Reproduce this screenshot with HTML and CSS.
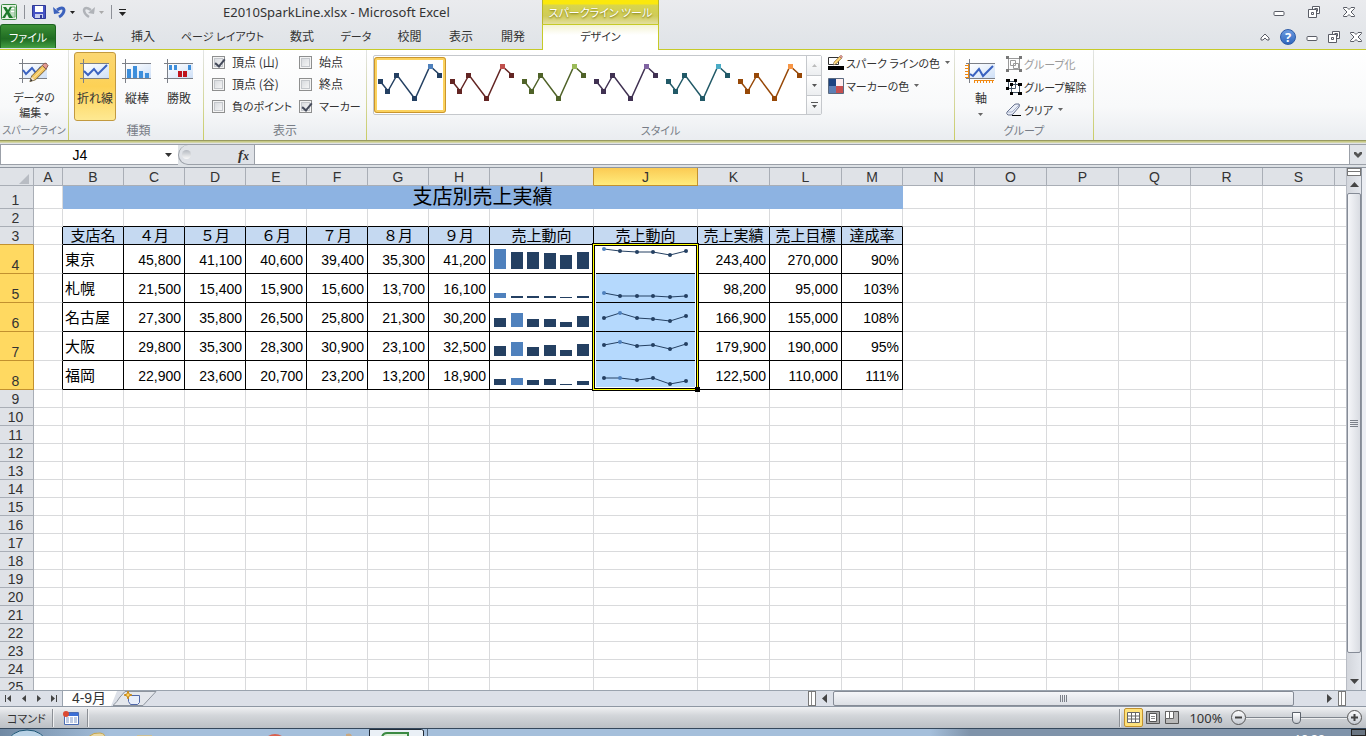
FILE: index.html
```html
<!DOCTYPE html>
<html lang="ja">
<head>
<meta charset="utf-8">
<title>E2010SparkLine.xlsx - Microsoft Excel</title>
<link rel="stylesheet" href="styles.css">
</head>
<body>
<svg class="defs" aria-hidden="true">
  <defs>
    <linearGradient id="chartBg" x1="0" y1="0" x2="1" y2="1"><stop offset="0" stop-color="#fff"/><stop offset="1" stop-color="#cfe0f7"/></linearGradient>
    <linearGradient id="tray" x1="0" y1="0" x2="0" y2="1"><stop offset="0" stop-color="#fff"/><stop offset="1" stop-color="#c3c8d0"/></linearGradient>
    <symbol id="min" viewBox="0 0 12 12"><rect x="1" y="5.500" width="10" height="4" rx="1" fill="#fff" stroke="#5a5d66"/></symbol>
    <symbol id="restore" viewBox="0 0 12 12"><path d="M4.500 3.500v-3h7v7h-3M0.500 3.500h8v8h-8z" fill="#fff" stroke="#5a5d66"/><path d="M3.500 6.500h2v2h-2zM6.500 2.500h3v3" fill="none" stroke="#5a5d66"/></symbol>
    <symbol id="close" viewBox="0 0 12 12"><path d="M0.500 1.500h3.500l2 2 2-2h3.500v1l-3.500 3.500 3.500 3.500v1h-3.500l-2-2-2 2h-3.500v-1l3.500-3.500-3.500-3.500z" fill="#fff" stroke="#5a5d66"/></symbol>
    <symbol id="down" viewBox="0 0 5 3"><path d="M0 0h5l-2.500 3z" fill="currentColor"/></symbol>
    <symbol id="spark" viewBox="0 0 66 50">
      <path d="M3 21l8 10 9-16 18 24 15-33 10 9" fill="none" stroke="currentColor" stroke-width="1.500"/>
      <path d="M1 19h5v5h-5zM8 29h5v5h-5zM17 13h5v5h-5zM35 36h5v5h-5zM60 13h5v5h-5z" fill="currentColor"/>
    </symbol>
    <symbol id="pencil" viewBox="0 0 22 22"><path d="M2 20l2-6 11-11 4 4-11 11z" fill="#f2c45c" stroke="#6d5a3a"/><path d="M15 3l2-2q2-1 3 1 2 1 0 3l-1 2z" fill="#e39a92" stroke="#8b5a50"/><path d="M2 20l2-5 3 3z" fill="#f7e4c4"/><path d="M2 20l1-3 2 2z" fill="#333"/><path d="M6 16l10-10" stroke="#fff0b8"/></symbol>
  </defs>
</svg>

<header class="top">
  <div class="titlebar">
    <div class="qat">
      <svg width="16" height="16" viewBox="0 0 16 16"><rect x="0.500" y="0.500" width="15" height="15" rx="1" fill="#e9f3e6" stroke="#3b8a43"/><path d="M9 3h5v10H9z" fill="#fff" stroke="#5fa565"/><path d="M10 6h4M10 9h4M10 11h4" stroke="#7fb984"/><path d="M2 3h3l2 3 2-3h2l-3 5 4 6H8l-2-4-2 4H1l4-6z" fill="#1e7a2c"/></svg>
      <i class="bar"></i>
      <button type="button" aria-label="上書き保存"><svg width="14" height="14" viewBox="0 0 14 14"><path d="M0.500 0.500h13v13h-11l-2-2z" fill="#4653c4" stroke="#303a96"/><path d="M3 1h8v6H3z" fill="#fff"/><path d="M3 9h8v4H3z" fill="#c9cfee"/><path d="M8 10h2v3H8z" fill="#303a96"/></svg></button>
      <button type="button" aria-label="元に戻す"><svg width="13" height="14" viewBox="0 0 13 14"><path d="M4 5q6-4 7 0 0 4-5 7" fill="none" stroke="#3c62bd" stroke-width="3"/><path d="M0 2l1 7 6-1z" fill="#3c62bd"/></svg><svg class="caret dark"><use href="#down"/></svg></button>
      <button type="button" aria-label="やり直し" disabled><svg width="13" height="14" viewBox="0 0 13 14"><path d="M9 5q-6-4-7 0 0 4 5 7" fill="none" stroke="#b0b3b8" stroke-width="2.500"/><path d="M13 2l-1 7-6-1z" fill="#b0b3b8"/></svg><svg class="caret pale"><use href="#down"/></svg></button>
      <i class="bar"></i>
      <button type="button" aria-label="カスタマイズ"><svg width="7" height="7" viewBox="0 0 7 7"><path d="M0 0h7v1H0zM0 3h7L3.500 7z" fill="#222"/></svg></button>
    </div>
    <h1>E2010SparkLine.xlsx - Microsoft Excel</h1>
  </div>
  <div class="context kana">スパークライン ツール</div>
  <div class="winbtns">
    <button type="button" aria-label="最小化"><svg width="12" height="12"><use href="#min"/></svg></button>
    <button type="button" aria-label="元のサイズ"><svg width="12" height="12"><use href="#restore"/></svg></button>
    <button type="button" aria-label="閉じる"><svg width="12" height="12"><use href="#close"/></svg></button>
  </div>
  <nav class="tabs">
    <button type="button" class="file kana">ファイル</button>
    <button type="button" class="kana">ホーム</button>
    <button type="button">挿入</button>
    <button type="button" class="kana">ページ レイアウト</button>
    <button type="button">数式</button>
    <button type="button" class="kana">データ</button>
    <button type="button">校閲</button>
    <button type="button">表示</button>
    <button type="button">開発</button>
  </nav>
  <button type="button" class="design kana">デザイン</button>
  <div class="docbtns">
    <button type="button" aria-label="リボンの最小化"><svg width="10" height="10" viewBox="0 0 10 10"><path d="M1 6l4-4 4 4v2H7L5 6 3 8H1z" fill="#fff" stroke="#5a5d66"/></svg></button>
    <button type="button" aria-label="ヘルプ" class="help">?</button>
    <button type="button" aria-label="最小化"><svg width="12" height="12"><use href="#min"/></svg></button>
    <button type="button" aria-label="元のサイズ"><svg width="12" height="12"><use href="#restore"/></svg></button>
    <button type="button" aria-label="閉じる"><svg width="12" height="12"><use href="#close"/></svg></button>
  </div>
</header>

<section class="ribbon">
  <div class="group g-data">
    <div class="body">
      <button type="button" class="big kana">
        <svg width="32" height="26" viewBox="0 0 32 26"><rect x="5" y="5" width="24" height="14" fill="url(#chartBg)"/><path d="M1 4.500h28M1 19.500h28M4.500 0v24" stroke="#7b7f87" fill="none"/><path d="M5 11l3 4 6-6 4 5 5-6" fill="none" stroke="#3a62c0" stroke-width="2"/><use href="#pencil" x="10" y="3" width="21" height="22"/></svg>
        <span>データの<br>編集 <svg class="caret"><use href="#down"/></svg></span>
      </button>
    </div>
    <div class="label">スパークライン</div>
  </div>
  <div class="group g-type">
    <div class="body">
      <button type="button" class="big on">
        <svg width="32" height="26" viewBox="0 0 32 26"><rect x="5" y="5" width="25" height="14" fill="url(#chartBg)"/><path d="M1 4.500h29M1 19.500h29M4.500 0v24" stroke="#7b7f87" fill="none"/><path d="M5 12l4 4 6-6 4 5 9-9" fill="none" stroke="#3a62c0" stroke-width="2"/></svg>
        <span>折れ線</span>
      </button>
      <button type="button" class="big">
        <svg width="32" height="26" viewBox="0 0 32 26"><rect x="5" y="5" width="25" height="14" fill="url(#chartBg)"/><path d="M1 4.500h29M1 19.500h29M4.500 0v24" stroke="#7b7f87" fill="none"/><path d="M6 10h4v9H6zM12 7h4v12h-4zM18 12h4v7h-4zM24 14h4v5h-4z" fill="#3d8edb"/></svg>
        <span>縦棒</span>
      </button>
      <button type="button" class="big">
        <svg width="32" height="26" viewBox="0 0 32 26"><rect x="5" y="5" width="25" height="14" fill="url(#chartBg)"/><path d="M1 4.500h29M1 19.500h29M4.500 0v24" stroke="#7b7f87" fill="none"/><path d="M6 6h3v5H6zM11 6h3v5h-3zM25 6h3v5h-3z" fill="#3d8edb"/><path d="M15 12h4v6h-4zM20 12h4v6h-4z" fill="#c0141c"/></svg>
        <span>勝敗</span>
      </button>
    </div>
    <div class="label">種類</div>
  </div>
  <div class="group g-show">
    <div class="body checks">
      <label><input type="checkbox" checked>頂点 (山)</label>
      <label><input type="checkbox">始点</label>
      <label><input type="checkbox">頂点 (谷)</label>
      <label><input type="checkbox">終点</label>
      <label class="kana"><input type="checkbox">負のポイント</label>
      <label class="kana"><input type="checkbox" checked>マーカー</label>
    </div>
    <div class="label">表示</div>
  </div>
  <div class="group g-style">
    <div class="body">
      <div class="gallery">
        <button type="button" class="st blue on" aria-label="スタイル 1"><svg width="66" height="50"><use href="#spark"/><rect x="51" y="4" width="5" height="5"/></svg></button>
        <button type="button" class="st red" aria-label="スタイル 2"><svg width="66" height="50"><use href="#spark"/><rect x="51" y="4" width="5" height="5"/></svg></button>
        <button type="button" class="st green" aria-label="スタイル 3"><svg width="66" height="50"><use href="#spark"/><rect x="51" y="4" width="5" height="5"/></svg></button>
        <button type="button" class="st purple" aria-label="スタイル 4"><svg width="66" height="50"><use href="#spark"/><rect x="51" y="4" width="5" height="5"/></svg></button>
        <button type="button" class="st teal" aria-label="スタイル 5"><svg width="66" height="50"><use href="#spark"/><rect x="51" y="4" width="5" height="5"/></svg></button>
        <button type="button" class="st orange" aria-label="スタイル 6"><svg width="66" height="50"><use href="#spark"/><rect x="51" y="4" width="5" height="5"/></svg></button>
        <div class="gscroll">
          <button type="button" aria-label="上へ" disabled><svg width="5" height="3" viewBox="0 0 5 3"><path d="M0 3h5L2.500 0z" fill="#bbb"/></svg></button>
          <button type="button" aria-label="下へ"><svg width="5" height="3"><use href="#down"/></svg></button>
          <button type="button" aria-label="その他"><svg width="7" height="6" viewBox="0 0 7 6"><path d="M0 0h7v1H0zM1 3h5L3.500 6z" fill="#555"/></svg></button>
        </div>
      </div>
      <div class="rows">
        <button type="button" class="small kana"><svg width="16" height="16" viewBox="0 0 16 16"><path d="M0.500 2.500h10v7h-10z" fill="#fff" stroke="#333"/><use href="#pencil" x="4" y="0" width="11" height="11"/><path d="M0 11h16v4H0z" fill="#000"/></svg>スパーク ラインの色<svg class="caret"><use href="#down"/></svg></button>
        <button type="button" class="small kana"><svg width="16" height="16" viewBox="0 0 16 16"><path d="M0.500 0.500h15v15h-15z" fill="#5d7fb4" stroke="#5b6a80"/><path d="M1 1h7v7H1z" fill="#1c4380"/><path d="M8 1h7v7H8z" fill="#fdeeee"/><path d="M8 8h7v7H8z" fill="#c65050"/></svg>マーカーの色<svg class="caret"><use href="#down"/></svg></button>
      </div>
    </div>
    <div class="label kana">スタイル</div>
  </div>
  <div class="group g-group">
    <div class="body">
      <button type="button" class="big">
        <svg width="32" height="26" viewBox="0 0 32 26"><rect x="5" y="5" width="25" height="14" fill="url(#chartBg)"/><path d="M1 4.500h29M1 19.500h29M4.500 0v24" stroke="#7b7f87" fill="none"/><path d="M5 15l3 2 6-7 4 7 10-10" fill="none" stroke="#3a62c0" stroke-width="2"/><path d="M3.500 5v14M0 6.500h3M0 9.500h3M0 12.500h3M0 15.500h3M0 18.500h3M9 21.500h20M9.500 21v3M12.500 21v3M15.500 21v3M18.500 21v3M21.500 21v3M24.500 21v3M27.500 21v3" stroke="#f08a14" fill="none"/></svg>
        <span>軸<br><svg class="caret"><use href="#down"/></svg></span>
      </button>
      <div class="rows">
        <button type="button" class="small kana" disabled><svg width="16" height="16" viewBox="0 0 16 16"><path d="M2.500 2.500h11v11h-11zM4.500 4.500h5v5h-5zM7.500 7.500h5v5h-5z" fill="none" stroke="#999"/><path d="M0 0h3v3H0zM13 0h3v3h-3zM0 13h3v3H0zM13 13h3v3h-3z" fill="#777"/></svg>グループ化</button>
        <button type="button" class="small kana"><svg width="16" height="16" viewBox="0 0 16 16"><path d="M2.500 2.500h7v7h-7zM5.500 5.500h8v8h-8z" fill="#fff" stroke="#456"/><path d="M0 0h4v3H0zM8 0h3v3H8zM0 8h3v3H0zM4 4h3v3H4zM12 4h4v3h-4zM4 13h3v3H4zM12 13h4v3h-4z" fill="#000"/></svg>グループ解除</button>
        <button type="button" class="small kana"><svg width="16" height="16" viewBox="0 0 16 16"><path d="M1 10l7-7q1-1 2-1h3q1 1 0 3l-6 7q-1 1-2 1H2q-2-1-1-3z" fill="#e9edf6" stroke="#66718e"/><path d="M2 10h4l7-7" fill="none" stroke="#a7b2cd"/><path d="M6 13h9v1H6z" fill="#000"/></svg>クリア<svg class="caret"><use href="#down"/></svg></button>
      </div>
    </div>
    <div class="label kana">グループ</div>
  </div>
</section>

<section class="formula">
  <div class="namebox"><input type="text" value="J4" aria-label="名前ボックス"><svg width="7" height="4" viewBox="0 0 7 4"><path d="M0 0h7L3.500 4z" fill="#333"/></svg></div>
  <div class="fxarea"><i class="knob"></i><button type="button" aria-label="関数の挿入"><em>f</em><sub>x</sub></button></div>
  <input type="text" class="fxinput" aria-label="数式バー">
  <button type="button" class="expand" aria-label="数式バーの展開"><svg width="8" height="6" viewBox="0 0 8 6"><path d="M0 0h2l2 2 2-2h2v2L4 6 0 2z" fill="#555"/></svg></button>
</section>

<main class="work">
  <div class="sheet"><table id="grid"></table></div>
  <div class="vscroll">
    <i class="split"></i>
    <button type="button" aria-label="上へスクロール"><svg width="9" height="5" viewBox="0 0 9 5"><path d="M0 5h9L4.500 0z" fill="#444"/></svg></button>
    <div class="vtrack"><div class="vthumb"><i></i><i></i><i></i><i></i></div></div>
    <button type="button" aria-label="下へスクロール"><svg width="9" height="5" viewBox="0 0 9 5"><path d="M0 0h9L4.500 5z" fill="#444"/></svg></button>
  </div>
</main>

<footer class="sheetbar">
  <div class="nav">
    <button type="button" aria-label="先頭"><svg width="8" height="7" viewBox="0 0 8 7"><path d="M0 0h1v7H0zM6 0v7L2 3.500z" fill="#444"/></svg></button>
    <button type="button" aria-label="前"><svg width="8" height="7" viewBox="0 0 8 7"><path d="M6 0v7L2 3.500z" fill="#444"/></svg></button>
    <button type="button" aria-label="次"><svg width="8" height="7" viewBox="0 0 8 7"><path d="M2 0v7l4-3.500z" fill="#444"/></svg></button>
    <button type="button" aria-label="末尾"><svg width="8" height="7" viewBox="0 0 8 7"><path d="M1 0v7l4-3.500zM6 0h1v7H6z" fill="#444"/></svg></button>
  </div>
  <button type="button" class="stab">4-9月</button>
  <button type="button" class="newtab" aria-label="ワークシートの挿入"><svg width="44" height="15" viewBox="0 0 44 15"><path d="M0 14.500Q4 11 7 6L12 .5H43L30 14.500z" fill="#e4e7ec" stroke="#8d949e"/><path d="M15.500 4.500h11v7l-2 2h-7l-2-3z" fill="#e8eefa" stroke="#5168a8"/><path d="M15 0l1 3 3 1-3 1-1 3-1-3-3-1 3-1z" fill="#ffd25a" stroke="#c98a1c"/></svg></button>
  <div class="hscroll">
    <i class="hsplit"></i>
    <button type="button" aria-label="左へスクロール"><svg width="5" height="9" viewBox="0 0 5 9"><path d="M5 0v9L0 4.500z" fill="#444"/></svg></button>
    <div class="htrack"><div class="hthumb"><i></i><i></i><i></i><i></i></div></div>
    <button type="button" aria-label="右へスクロール"><svg width="5" height="9" viewBox="0 0 5 9"><path d="M0 0v9l5-4.500z" fill="#444"/></svg></button>
    <i class="hsplit"></i>
  </div>
</footer>

<footer class="status">
  <span class="mode">コマンド</span>
  <i class="sep"></i>
  <button type="button" class="rec" aria-label="マクロの記録"><svg width="16" height="14" viewBox="0 0 16 14"><path d="M1.500 1.500h14v12h-14z" fill="#fff" stroke="#4a6cb4"/><path d="M2 2h13v3H2z" fill="#3c6fd6"/><path d="M3 7h3M7 7h3M11 7h3M3 9h3M7 9h3M11 9h3M3 11h3M7 11h3M11 11h3" stroke="#7f97c8"/><circle cx="3" cy="3" r="3" fill="#dc4a32"/></svg></button>
  <i class="sep"></i>
  <span class="fill"></span>
  <i class="sep"></i>
  <button type="button" class="view on" aria-label="標準"><svg width="13" height="11" viewBox="0 0 13 11"><path d="M.5.500h12v10H.5zM.5 4h12M.5 7h12M4.500.500v10M8.500.500v10" fill="#fff" stroke="#666"/></svg></button>
  <button type="button" class="view" aria-label="ページ レイアウト"><svg width="14" height="13" viewBox="0 0 14 13"><path d="M.5.500h13v12H.5z" fill="#aaa" stroke="#555"/><path d="M3.500 2.500h7v8h-7z" fill="#fff" stroke="#555"/><path d="M5 5.500h4M5 7.500h4" stroke="#888"/></svg></button>
  <button type="button" class="view" aria-label="改ページ プレビュー"><svg width="14" height="13" viewBox="0 0 14 13"><path d="M.5.500h13v12H.5z" fill="#b9b9b9" stroke="#555"/><path d="M.5.500h4v7h-4zM4.500.500h4v7h-4z" fill="#fff" stroke="#666"/></svg></button>
  <span class="pct">100%</span>
  <button type="button" class="zoom" aria-label="縮小"><svg width="15" height="15" viewBox="0 0 15 15"><circle cx="7.500" cy="7.500" r="7" fill="url(#tray)" stroke="#555"/><path d="M4 6.500h7v2H4z" fill="#444"/></svg></button>
  <input type="range" min="0" max="100" value="50" aria-label="ズーム">
  <button type="button" class="zoom" aria-label="拡大"><svg width="15" height="15" viewBox="0 0 15 15"><circle cx="7.500" cy="7.500" r="7" fill="url(#tray)" stroke="#555"/><path d="M4 6.500h7v2H4zM6.500 4h2v7h-2z" fill="#444"/></svg></button>
</footer>

<div class="taskbar">
  <svg width="1366" height="8" viewBox="0 0 1366 8"><ellipse cx="27" cy="14" rx="19" ry="13" fill="#b9d2e6" stroke="#1d5675"/><path d="M88 8q6-5 12-4q6 1 4 4" fill="#e9d9a6" stroke="#c5a550"/><path d="M137 6h15v2h-15z" fill="#cdbf94"/><ellipse cx="275" cy="11" rx="9" ry="6" fill="#d9604f"/><path d="M346 5q6-2 6 3h-6z" fill="#c9a880"/><path d="M369.500 8v-7.500h52l2 1v6.500" fill="#eaf0f6" stroke="#222c38"/><path d="M382 8q1-4 5-4h21v4" fill="#dff0dc" stroke="#3b8a43" stroke-width="2"/><path d="M427.500 0v8" stroke="#50657c"/></svg>
  <span class="clock">18:38</span>
  <i class="desk"></i>
</div>
<script src="grid.js"></script>
</body>
</html>
```

FILE: styles.css
```css
* { box-sizing: border-box; }
html, body { height: 100%; }
body {
  margin: 0;
  display: flex;
  flex-direction: column;
  overflow: hidden;
  background: #dee2e6;
  color: #333;
  font: 12px/14px "Noto Sans CJK JP", sans-serif;
  font-feature-settings: "palt";
}
.defs { position: absolute; width: 0; height: 0; }
svg { display: block; flex: none; }
i { display: block; flex: none; }
button {
  border: 0;
  padding: 0;
  background: none;
  color: inherit;
  font: inherit;
  font-feature-settings: inherit;
  display: flex;
  align-items: center;
  justify-content: center;
}
input { font: inherit; color: inherit; border-radius: 0; }
.kana { font-size: 11px; }
.caret { width: 5px; height: 3px; color: #666; }
.caret.dark { color: #222; }
.caret.pale { color: #aaa; }

/* title bar and tabs */
.top {
  display: grid;
  grid-template-columns: 542px 117px 1fr;
  grid-template-rows: 24px 26px;
  background: linear-gradient(#eaebee, #dfe3e7);
  flex: none;
}
.titlebar { display: flex; align-items: center; }
.qat { display: flex; align-items: center; gap: 7px; width: 223px; padding-left: 1px; }
.qat button { gap: 4px; }
.qat .bar { width: 1px; height: 14px; background: #8d9097; }
h1 { margin: 0; font: 13px/20px "Noto Sans", sans-serif; white-space: nowrap; }
.context {
  border: 1px solid #b9b62a;
  border-width: 0 1px;
  background: linear-gradient(#fbe80c 0 4px, #d8d54c 5px, #cfcb58 16px, #e4dfa0);
  color: #fff;
  text-shadow: 0 1px 2px #6f6b10;
  text-align: center;
  line-height: 24px;
  white-space: nowrap;
}
.winbtns, .docbtns { display: flex; justify-content: flex-end; align-items: center; }
.winbtns { gap: 23px; padding-right: 11px; }
.docbtns { gap: 10px; padding-right: 4px; }
.tabs, .docbtns { border-bottom: 1px solid #c6ca28; }
.tabs, .design { padding-bottom: 1px; }
.tabs {
  display: grid;
  grid-template-columns: 56px 64px 46px 113px 46px 62px 45px 58px 46px;
}
.file {
  background: linear-gradient(#3c8f35, #1f6c22 60%, #43a043);
  border: 1px solid #1c6420;
  border-bottom: 0;
  border-radius: 3px 3px 0 0;
  color: #fff;
}
.design {
  border: 1px solid #c6ca28;
  border-bottom: 0;
  padding-bottom: 3px;
  background: linear-gradient(#f4f3d4, #fff 10px);
}
.help {
  width: 16px;
  height: 16px;
  border-radius: 50%;
  border: 1px solid #2d5ba8;
  background: linear-gradient(#6b9be0, #2f66bd);
  color: #fff;
  font: bold 13px/14px "Noto Sans", sans-serif;
}

/* ribbon */
.ribbon {
  display: flex;
  flex: none;
  height: 94px;
  padding-bottom: 4px;
  background:
    linear-gradient(#989a60 1px, #c6c885 1px 2px, #d3d5a8 2px 3px, #dfe2e4 3px) bottom / 100% 4px no-repeat,
    linear-gradient(#fff, #f8f9fa 60%, #e8ebef);
}
.group {
  display: flex;
  flex-direction: column;
  border-right: 1px solid;
  border-image: linear-gradient(#e3e5e8, #c9cc62) 1;
  border-width: 0 1px 0 0;
}
.body { display: flex; flex: 1; padding-top: 2px; }
.label { text-align: center; color: #777c86; height: 19px; line-height: 18px; white-space: nowrap; }
.g-data { width: 69px; }
.g-data .label { font-size: 10px; }
.g-type { width: 135px; padding-left: 5px; }
.g-show { width: 163px; }
.g-style { width: 588px; }
.g-group { width: 139px; }
.big {
  flex-direction: column;
  justify-content: flex-start;
  width: 42px;
  height: 69px;
  padding-top: 6px;
  gap: 5px;
  border: 1px solid transparent;
  line-height: 15px;
  white-space: nowrap;
}
.big span { text-align: center; }
.big .caret { display: inline-block; vertical-align: middle; }
.big.on {
  border-color: #c29a40;
  border-radius: 3px;
  background: linear-gradient(#fbd772, #fdd155 50%, #fee992);
}
.g-data .big { width: 68px; }
.checks {
  display: grid;
  grid-template-columns: 87px 1fr;
  grid-auto-rows: 22px;
  padding-top: 1px;
  padding-left: 8px;
}
.checks label { display: flex; align-items: center; gap: 7px; white-space: nowrap; }
.checks input {
  appearance: none;
  flex: none;
  width: 13px;
  height: 13px;
  margin: 0;
  border: 1px solid #8e8f8f;
  background: linear-gradient(135deg, #d2d5d9, #fbfbfb);
  box-shadow: inset 0 0 0 1px #f4f4f4, inset 0 0 0 2px #c4c7cb;
}
.checks input:checked::before {
  content: "";
  display: block;
  width: 4px;
  height: 8px;
  margin: 0 0 0 4px;
  border: solid #444a5a;
  border-width: 0 2px 2px 0;
  rotate: 40deg;
}
.g-style .body { padding: 5px 0 0 6px; gap: 6px; }
.gallery { display: flex; height: 60px; border: 1px solid #c5c8cc; background: #fff; border-radius: 2px; }
.st { width: 72px; height: 56px; margin-top: 1px; border: 3px solid transparent; }
.st.on { border-color: #fbd25e; outline: 1px solid #c9952e; outline-offset: -1px; border-radius: 3px; }
.blue { color: #244062; } .blue rect { fill: #4f81bd; }
.red { color: #632523; } .red rect { fill: #c0504d; }
.green { color: #4f6228; } .green rect { fill: #9bbb59; }
.purple { color: #403152; } .purple rect { fill: #8064a2; }
.teal { color: #215967; } .teal rect { fill: #4bacc6; }
.orange { color: #974807; } .orange rect { fill: #f79646; }
.gscroll { display: grid; grid-template-rows: repeat(3, 1fr); width: 15px; border-left: 1px solid #c5c8cc; color: #555; }
.gscroll button { background: linear-gradient(#fff, #eceef0); }
.gscroll button + button { border-top: 1px solid #c5c8cc; }
.rows { display: flex; flex-direction: column; }
.small { height: 23px; gap: 2px; justify-content: flex-start; white-space: nowrap; }
.small .caret { margin-left: 3px; }
.small:disabled { color: #9a9a9a; }
.g-style .rows { margin-top: -4px; }
.g-group .body { padding-left: 5px; gap: 4px; }

/* formula bar */
.formula {
  display: flex;
  flex: none;
  height: 23px;
  border-top: 1px solid #9ba0a8;
  padding-bottom: 2px;
}
.formula > * { border-bottom: 1px solid #9ba0a8; }
.namebox { display: flex; align-items: center; width: 178px; padding-right: 6px; background: #fff; border-left: 1px solid #9ba0a8; }
.namebox input { flex: 1; min-width: 0; border: 0; padding: 0 6px 0 0; text-align: center; background: none; color: #000; font: 14px/18px "Liberation Sans", sans-serif; }
.fxarea { display: flex; align-items: center; justify-content: space-between; width: 77px; padding: 0 5px 0 3px; border-left: 1px solid #9ba0a8; border-right: 1px solid #9ba0a8; border-radius: 10px 0 0 10px; background: #dfe2e7; }
.knob { width: 9px; height: 9px; border-radius: 50%; background: linear-gradient(#b4b9c0, #fafafa); }
.fxarea button { font: bold 15px/18px "Liberation Serif", serif; align-items: baseline; }
.fxarea sub { font-size: 12px; font-style: italic; line-height: 12px; }
.fxinput { flex: 1; min-width: 0; border-width: 0 0 1px; background: #fff; }
.expand { width: 17px; border-left: 1px solid #9ba0a8; background: #e1e4e9; }

/* worksheet */
.work { display: flex; flex: 1; min-height: 0; border-top: 1px solid #8f96a0; }
.sheet { flex: 1; min-width: 0; overflow: hidden; background: #fff; }
table { table-layout: fixed; width: 0; border-collapse: separate; border-spacing: 0; font: 14px/16px "Liberation Sans", "Noto Sans CJK JP", sans-serif; font-feature-settings: normal; color: #000; }
.w-head { width: 34px; } .w-a { width: 29px; } .w-month { width: 61px; } .w-spark { width: 104px; } .w-wide { width: 72px; }
th, td { padding: 0; border: 0 solid #d9dadc; border-width: 0 1px 1px 0; height: 18px; white-space: nowrap; }
th { font-weight: 400; background: #dfe2e7; border-color: #a9aeb6; color: #333; }
thead th { padding-top: 1px; }
tbody th { vertical-align: bottom; padding-right: 2px; line-height: 15px; }
th.hot { background: #ffd961; border-color: #c2912f; }
thead th.hot { background: linear-gradient(#fbcb54, #ffec7c); }
th.edge { border-bottom-color: #c2912f; }
thead th.edge { border-right-color: #c2912f; border-bottom-color: #a9aeb6; }
.corner svg { margin: 3px 4px 0 auto; }
.r-title > * { height: 23px; }
.r-data > * { height: 29px; }
td.title { background: #8db3e2; border-color: #8db3e2; text-align: center; font-size: 20px; line-height: 22px; }
td.blackb { border-bottom-color: #000; }
td.blackr { border-right-color: #000; }
td.head { background: #c5d9f1; border-color: #000; text-align: center; font-size: 15px; padding-top: 1px; }
td.num, td.name, td.cell { border-color: #000; }
td.num { text-align: right; padding: 2px 3px 0 0; }
td.name { padding: 1px 0 0 2px; font-size: 15px; }
td.picked { background: #b5d9fd; }
td.anchor { position: relative; }
.selection {
  position: absolute;
  left: -2px;
  top: -2px;
  width: 107px;
  height: 148px;
  border: 1px solid #000;
  box-shadow: inset 0 0 0 1px #ff0, inset 0 0 0 2px #000, inset 0 0 0 3px #fff;
}
.selection::after {
  content: "";
  position: absolute;
  right: -2px;
  bottom: -2px;
  width: 5px;
  height: 5px;
  background: #000;
}

/* scroll bars */
.vscroll { display: flex; flex-direction: column; width: 20px; border-left: 1px solid #b8bcc4; border-right: 4px solid #eceef3; background: linear-gradient(90deg, #d3d6dc, #e5e8ee); box-shadow: inset -1px 0 #8f96a0; }
.vscroll button { height: 17px; width: 14px; }
.split { width: 14px; height: 8px; border: 1px solid #777; background: linear-gradient(#fff 2px, #777 2px 3px, #fff 3px); }
.vtrack { flex: 1; display: flex; padding-bottom: 20px; }
.vthumb, .hthumb { display: flex; align-items: center; justify-content: center; gap: 1px; border: 1px solid #858b96; border-radius: 2px; }
.vthumb { flex-direction: column; width: 14px; background: linear-gradient(90deg, #f5f6f9, #d9dce2); }
.vthumb i { width: 8px; height: 1px; background: #7b8089; }
.sheetbar { display: flex; flex: none; height: 16px; border-top: 1px solid #9aa3ae; background: #dce0e8; }
.nav { display: flex; align-items: center; gap: 7px; width: 63px; padding-left: 5px; border-right: 1px solid #9aa3ae; }
.stab { width: 54px; background: #fff; clip-path: polygon(0 0, 100% 0, 48px 100%, 0 100%); font: 14px/15px "Liberation Sans", "Noto Sans CJK JP", sans-serif; margin-right: -4px; padding-right: 2px; }
.hscroll { display: flex; width: 538px; margin-left: auto; margin-right: 20px; }
.hscroll button { width: 17px; }
.hsplit { width: 8px; border: 1px solid #777; background: linear-gradient(90deg, #fff 2px, #888 2px 3px, #fff 3px); }
.htrack { flex: 1; display: flex; padding-right: 27px; }
.hthumb { flex: 1; background: linear-gradient(#f5f6f9, #dcdfe5); }
.hthumb i { width: 1px; height: 7px; background: #7b8089; }

/* status bar */
.status { display: flex; align-items: center; flex: none; height: 22px; border-top: 1px solid #8e97a3; background: linear-gradient(#f0f1f3, #d3d6da 40%, #bcc0c5); padding-right: 4px; }
.mode { width: 52px; padding-left: 7px; white-space: nowrap; font-size: 11px; }
.sep { width: 2px; height: 18px; background: linear-gradient(90deg, #8b8f95 1px, #f0f1f2 1px); }
.rec { width: 33px; }
.fill { flex: 1; }
.view { width: 19px; height: 19px; }
.view.on { margin-left: 3px; border: 1px solid #c2912f; border-radius: 2px; background: #ffe27a; }
.pct { width: 50px; text-align: center; font: 13px/14px "Noto Sans", sans-serif; }
.status input { appearance: none; width: 101px; height: 15px; margin: 0; background: linear-gradient(transparent 7px, #7f858d 7px 8px, #eee 8px 9px, transparent 9px); }
.status input::-webkit-slider-thumb { appearance: none; width: 9px; height: 12px; background: linear-gradient(#fff, #c8ccd2); border: 1px solid #5d636c; border-radius: 1px 1px 5px 5px; }

/* task bar */
.taskbar { position: relative; display: flex; flex: none; height: 8px; overflow: hidden; border-top: 1px solid #35485c; background: linear-gradient(90deg, #7089a3, #a5bfdb 110px, #a5bfdb 930px, #7f93aa 970px, #7f93aa); }
.taskbar svg { position: absolute; left: 0; top: 0; }
.clock { margin-left: auto; padding: 4px 26px 0 0; color: #fff; font: 12px/14px "Noto Sans", sans-serif; }
.desk { width: 15px; border: 1px solid #222; background: #6a7683; }
```

FILE: grid.js
```js
const letters = "ABCDEFGHIJKLMNOPQRS".split("");
const widths = ["head", "a", ...Array(7).fill("month"), "spark", "spark", "wide", "wide", "month", ...Array(7).fill("wide")];
const heads = ["支店名", "４月", "５月", "６月", "７月", "８月", "９月", "売上動向", "売上動向", "売上実績", "売上目標", "達成率"];
const branches = [
  { name: "東京", months: ["45,800", "41,100", "40,600", "39,400", "35,300", "41,200"], bars: [20, 17, 17, 16, 14, 17], line: [4, 6, 7, 7, 10, 6], totals: ["243,400", "270,000", "90%"], top: 0 },
  { name: "札幌", months: ["21,500", "15,400", "15,900", "15,600", "13,700", "16,100"], bars: [5, 2, 2, 2, 1, 2], line: [19, 22, 22, 22, 23, 22], totals: ["98,200", "95,000", "103%"], top: 0 },
  { name: "名古屋", months: ["27,300", "35,800", "26,500", "25,800", "21,300", "30,200"], bars: [9, 14, 8, 8, 5, 11], line: [15, 10, 15, 16, 18, 13], totals: ["166,900", "155,000", "108%"], top: 1 },
  { name: "大阪", months: ["29,800", "35,300", "28,300", "30,900", "23,100", "32,500"], bars: [10, 14, 9, 11, 6, 12], line: [13, 10, 14, 13, 17, 12], totals: ["179,900", "190,000", "95%"], top: 1 },
  { name: "福岡", months: ["22,900", "23,600", "20,700", "23,200", "13,200", "18,900"], bars: [6, 7, 5, 6, 1, 4], line: [17, 17, 19, 17, 23, 20], totals: ["122,500", "110,000", "111%"], top: 1 }
];
const DARK = "#244062", PEAK = "#4f81bd";
const barX = [4, 21, 37, 54, 70, 87];
const dotX = [10, 26, 43, 59, 76, 92];

const barChart = b => `<svg width="103" height="28">${b.bars.map((h, i) =>
  `<rect x="${barX[i]}" y="${24 - h}" width="12" height="${h}" fill="${i === b.top ? PEAK : DARK}"/>`).join("")}</svg>`;
const lineChart = b => `<svg width="103" height="28"><polyline points="${b.line.map((y, i) => dotX[i] + "," + y).join(" ")}" fill="none" stroke="${DARK}"/>${b.line.map((y, i) =>
  `<circle cx="${dotX[i]}" cy="${y}" r="2" fill="${i === b.top ? PEAK : DARK}"/>`).join("")}</svg>`;
const td = (cls, html = "") => `<td${cls ? ` class="${cls}"` : ""}>${html}</td>`;
const blanks = (n, cls) => td(cls).repeat(n);

let html = `<colgroup>${widths.map(w => `<col class="w-${w}">`).join("")}</colgroup><thead><tr>
<th class="corner"><svg width="10" height="10"><path d="M10 0v10H0z" fill="#b8bcc3"/></svg></th>
${letters.map(l => `<th class="${l === "J" ? "hot" : l === "I" ? "edge" : ""}">${l}</th>`).join("")}<th></th></tr></thead><tbody>`;
html += `<tr class="r-title"><th>1</th>${td()}<td class="title" colspan="12">支店別売上実績</td>${blanks(7)}</tr>`;
html += `<tr><th>2</th>${td()}${blanks(12, "blackb")}${blanks(7)}</tr>`;
html += `<tr><th class="edge">3</th>${td("blackr")}${heads.map(h => td("head", h)).join("")}${blanks(7)}</tr>`;
branches.forEach((b, i) => {
  html += `<tr class="r-data"><th class="hot">${i + 4}</th>${td("blackr")}${td("name", b.name)}`
    + b.months.map(m => td("num", m)).join("")
    + td("cell", barChart(b))
    + td(i ? "cell picked" : "cell anchor", lineChart(b) + (i ? "" : `<div class="selection"></div>`))
    + b.totals.map(t => td("num", t)).join("") + blanks(7) + "</tr>";
});
for (let r = 9; r <= 25; r++) html += `<tr><th>${r}</th>${blanks(20)}</tr>`;
document.getElementById("grid").innerHTML = html + "</tbody>";
```
